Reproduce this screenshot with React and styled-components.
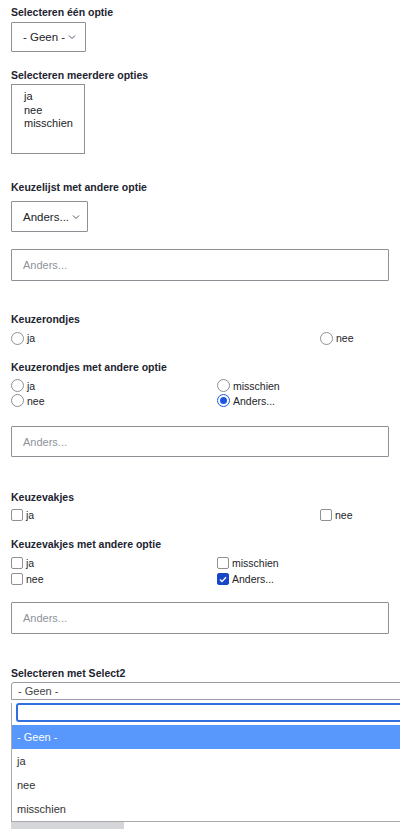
import React from "react";
import styled, { createGlobalStyle } from "styled-components";

const Global = createGlobalStyle`
  html, body { margin: 0; padding: 0; background: #fff; overflow: hidden; }
  body { font-family: "Liberation Sans", Arial, sans-serif; color: #222330; }
`;

const Page = styled.div`
  padding: 0 11px;
  width: 378px;
`;

const Label = styled.div`
  font-size: 10.5px;
  font-weight: 700;
  line-height: 14px;
  color: #222330;
  margin-top: ${(p) => p.$mt}px;
`;

const SelectBox = styled.div`
  box-sizing: border-box;
  width: ${(p) => p.$w}px;
  height: ${(p) => p.$h}px;
  margin-top: ${(p) => p.$mt}px;
  border: 1px solid #8e9096;
  border-radius: 1px;
  display: flex;
  align-items: center;
  gap: 3px;
  padding: 0 0 0 11px;
  font-size: 11.5px;
  color: #232429;
`;

const Chevron = () => (
  <svg width="8" height="6" viewBox="0 0 8 6">
    <path d="M1 1.5l3 3 3-3" fill="none" stroke="#55575e" strokeWidth="1" />
  </svg>
);

const MultiBox = styled.div`
  box-sizing: border-box;
  width: 74px;
  height: 70px;
  margin-top: 2px;
  border: 1px solid #8e9096;
  padding: 5px 0 0 12px;
  font-size: 11px;
  line-height: 13.5px;
  color: #232429;
`;

const TextInput = styled.div`
  box-sizing: border-box;
  width: 378px;
  height: ${(p) => p.$h}px;
  margin-top: ${(p) => p.$mt}px;
  border: 1px solid #8e9096;
  border-radius: 1px;
  display: flex;
  align-items: center;
  padding-left: 11px;
  font-size: 11px;
  color: #8f929a;
`;

const OptGrid = styled.div`
  display: grid;
  grid-template-columns: ${(p) => p.$cols};
  margin-top: ${(p) => p.$mt}px;
`;

const Opt = styled.div`
  display: flex;
  align-items: center;
  height: ${(p) => p.$h}px;
  gap: 3px;
  font-size: 10.5px;
  color: #232429;
`;

const Radio = styled.span`
  box-sizing: border-box;
  width: 13px;
  height: 13px;
  border-radius: 50%;
  border: 1px solid ${(p) => (p.$on ? "#1c56e6" : "#8e9096")};
  display: inline-flex;
  align-items: center;
  justify-content: center;
  &::after {
    content: "";
    display: ${(p) => (p.$on ? "block" : "none")};
    width: 7px;
    height: 7px;
    border-radius: 50%;
    background: #1c56e6;
  }
`;

const Check = styled.span`
  box-sizing: border-box;
  width: 12px;
  height: 12px;
  border-radius: 2px;
  border: 1px solid ${(p) => (p.$on ? "#1846c9" : "#8e9096")};
  background: ${(p) => (p.$on ? "#1846c9" : "#fff")};
  display: inline-flex;
  align-items: center;
  justify-content: center;
`;

const Select2 = styled.div`
  width: 400px;
  margin-top: 2px;
  position: relative;
`;

const S2Box = styled.div`
  box-sizing: border-box;
  height: 18px;
  border: 1px solid #9a9ca3;
  border-radius: 3px 3px 0 0;
  display: flex;
  align-items: center;
  padding-left: 6px;
  font-size: 11px;
  color: #444;
`;

const S2Drop = styled.div`
  box-sizing: border-box;
  border: 1px solid #aaa;
  border-top: none;
  background: #fff;
`;

const S2Search = styled.div`
  box-sizing: border-box;
  height: 19px;
  margin: 3px 0 3px 4px;
  border: 2px solid #2f6fe0;
  border-radius: 3px;
`;

const S2Opt = styled.div`
  height: 24px;
  display: flex;
  align-items: center;
  padding-left: 5px;
  font-size: 11px;
  color: ${(p) => (p.$hl ? "#fff" : "#333")};
  background: ${(p) => (p.$hl ? "#5897fb" : "#fff")};
`;

const Bar = styled.div`
  width: 113px;
  height: 7px;
  background: #d5d6da;
`;

const CheckMark = () => (
  <svg width="8" height="7" viewBox="0 0 8 7">
    <path d="M1 3.6l2 2L7 1.2" fill="none" stroke="#fff" strokeWidth="1.4" />
  </svg>
);

function RadioOpt({ on, children, h = 16 }) {
  return (
    <Opt $h={h}>
      <Radio $on={on} />
      {children}
    </Opt>
  );
}

function CheckOpt({ on, children, h = 16 }) {
  return (
    <Opt $h={h}>
      <Check $on={on}>{on && <CheckMark />}</Check>
      {children}
    </Opt>
  );
}

export default function App() {
  return (
    <>
      <Global />
      <Page>
        <Label $mt={5}>Selecteren één optie</Label>
        <SelectBox $w={75} $h={30} $mt={3}>
          - Geen -<Chevron />
        </SelectBox>

        <Label $mt={16}>Selecteren meerdere opties</Label>
        <MultiBox>
          ja
          <br />
          nee
          <br />
          misschien
        </MultiBox>

        <Label $mt={26}>Keuzelijst met andere optie</Label>
        <SelectBox $w={77} $h={31} $mt={7}>
          Anders...<Chevron />
        </SelectBox>
        <TextInput $h={32} $mt={17}>Anders...</TextInput>

        <Label $mt={31}>Keuzerondjes</Label>
        <OptGrid $cols="309px auto" $mt={4}>
          <RadioOpt>ja</RadioOpt>
          <RadioOpt>nee</RadioOpt>
        </OptGrid>

        <Label $mt={14}>Keuzerondjes met andere optie</Label>
        <OptGrid $cols="206px auto" $mt={4}>
          <RadioOpt h={15}>ja</RadioOpt>
          <RadioOpt h={15}>misschien</RadioOpt>
          <RadioOpt h={15}>nee</RadioOpt>
          <RadioOpt h={15} on>Anders...</RadioOpt>
        </OptGrid>
        <TextInput $h={31} $mt={18}>Anders...</TextInput>

        <Label $mt={33}>Keuzevakjes</Label>
        <OptGrid $cols="309px auto" $mt={3}>
          <CheckOpt>ja</CheckOpt>
          <CheckOpt>nee</CheckOpt>
        </OptGrid>

        <Label $mt={14}>Keuzevakjes met andere optie</Label>
        <OptGrid $cols="206px auto" $mt={4}>
          <CheckOpt>ja</CheckOpt>
          <CheckOpt>misschien</CheckOpt>
          <CheckOpt>nee</CheckOpt>
          <CheckOpt on>Anders...</CheckOpt>
        </OptGrid>
        <TextInput $h={32} $mt={15}>Anders...</TextInput>

        <Label $mt={32}>Selecteren met Select2</Label>
        <Select2>
          <S2Box>- Geen -</S2Box>
          <S2Drop>
            <S2Search />
            <S2Opt $hl>- Geen -</S2Opt>
            <S2Opt>ja</S2Opt>
            <S2Opt>nee</S2Opt>
            <S2Opt>misschien</S2Opt>
          </S2Drop>
          <Bar />
        </Select2>
      </Page>
    </>
  );
}
